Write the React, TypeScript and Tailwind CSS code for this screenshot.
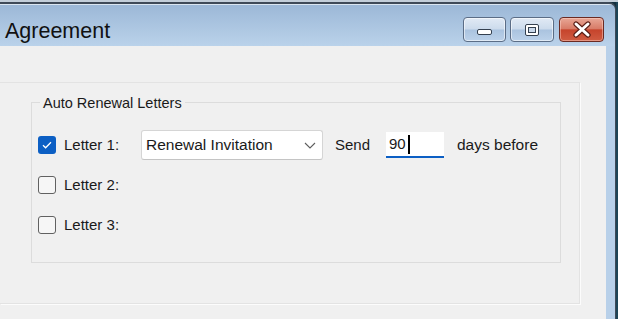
const ui = { fontFamily: '"Liberation Sans", Arial, sans-serif' };

function Checkbox({ checked }: { checked?: boolean }) {
  if (checked) {
    return (
      <span className="w-[18px] h-[18px] rounded-[3px] bg-[#0c5fc4] flex items-center justify-center shrink-0">
        <svg width="12" height="10" viewBox="0 0 12 10">
          <path d="M2 5.2 L4.6 7.8 L10 2.2" fill="none" stroke="#ffffff" strokeWidth="1.3" />
        </svg>
      </span>
    );
  }
  return (
    <span className="w-[18px] h-[18px] rounded-[3px] border border-[#616161] bg-[#f6f6f6] shrink-0" />
  );
}

function LetterRow({ n, checked, children }: { n: number; checked?: boolean; children?: React.ReactNode }) {
  return (
    <div className="h-[40px] flex items-center pl-[6px]">
      <Checkbox checked={checked} />
      <span className="ml-[8px] w-[77px] text-[15px] text-[#1a1a1a]">Letter {n}:</span>
      {children}
    </div>
  );
}

export default function App() {
  return (
    <div className="w-[618px] h-[319px] overflow-hidden flex flex-col bg-[#13303f]" style={ui}>
      <div className="h-[2px] bg-[#c3ced9] shrink-0" />
      <div className="flex flex-1 min-h-0">
        <div className="w-[616px] flex flex-col border-t-2 border-r border-[#3f4a58] rounded-tr-[7px] overflow-hidden">
          <div className="h-px bg-[#dbe6f1]" />
          {/* title bar */}
          <div className="h-[41px] flex bg-[linear-gradient(#9cb8d7,#bad2ea)]">
            <div className="flex-1 pl-[5px] pt-[13px] text-[21.5px] leading-[26px] text-[#111]">Agreement</div>
            <div className="flex items-start pt-[12px] pr-[11px]">
              <div className="w-[43px] h-[25px] rounded-[4px] border border-[#5b6d86] shadow-[inset_0_0_0_1px_rgba(255,255,255,0.55)] bg-[linear-gradient(#e1eaf5_0%,#ccdbec_48%,#aac3df_52%,#bcd2ea_100%)] flex justify-center">
                <div className="mt-[11px] w-[15px] h-[6px] rounded-[2px] border border-[#34404f] bg-white" />
              </div>
              <div className="ml-[4px] w-[44px] h-[25px] rounded-[4px] border border-[#5b6d86] shadow-[inset_0_0_0_1px_rgba(255,255,255,0.55)] bg-[linear-gradient(#e1eaf5_0%,#ccdbec_48%,#aac3df_52%,#bcd2ea_100%)] flex items-center justify-center">
                <div className="w-[14px] h-[12px] rounded-[2px] border border-[#34404f] bg-white p-[2px] flex">
                  <div className="flex-1 border border-[#34404f] bg-[#c9d8ea]" />
                </div>
              </div>
              <div className="ml-[5px] w-[45px] h-[25px] rounded-[4px] border border-[#6b2a22] shadow-[inset_0_0_0_1px_rgba(255,220,210,0.45)] bg-[linear-gradient(#e8a796_0%,#d87c68_46%,#c6442c_52%,#d05c42_100%)] flex items-center justify-center">
                <svg width="22" height="17" viewBox="0 0 22 17">
                  <path d="M5 3 L17 14 M17 3 L5 14" stroke="#5a1e16" strokeWidth="5.2" strokeLinecap="round" />
                  <path d="M5 3 L17 14 M17 3 L5 14" stroke="#ffffff" strokeWidth="3" strokeLinecap="round" />
                </svg>
              </div>
            </div>
          </div>
          {/* body */}
          <div className="flex flex-1 min-h-0">
            <div className="w-[606px] bg-[#f0f0f0] pt-[36px]">
              <div className="w-[580px] h-[222px] border border-l-0 border-[#e3e3e3] shadow-[1px_1px_0_#fcfcfc] pt-[19px]">
                <div className="ml-[31px] w-[530px] h-[161px] border border-[#dcdcdc] flex flex-col">
                  <span className="-mt-[9px] ml-[8px] px-[3px] w-fit bg-[#f0f0f0] text-[14.5px] leading-[18px] text-[#1a1a1a]">
                    Auto Renewal Letters
                  </span>
                  <div className="mt-[13px] flex flex-col">
                    <LetterRow n={1} checked>
                      <div className="w-[182px] h-[30px] rounded-[3px] border border-[#d5d5d5] border-b-[#c4c4c4] bg-white flex items-center pl-[4px] pr-[6px]">
                        <span className="flex-1 text-[15.5px] text-[#1a1a1a]">Renewal Invitation</span>
                        <svg width="12" height="7" viewBox="0 0 12 7">
                          <path d="M1 1 L6 6 L11 1" fill="none" stroke="#5f5f5f" strokeWidth="1.1" />
                        </svg>
                      </div>
                      <span className="ml-[12px] w-[51px] text-[15px] text-[#1a1a1a]">Send</span>
                      <div className="w-[58px] h-[26px] bg-white border-b-2 border-[#0c5fc4] flex items-center pl-[3px]">
                        <span className="text-[15px] text-[#1a1a1a]">90</span>
                        <span className="ml-[2px] w-[2px] h-[19px] bg-black" />
                      </div>
                      <span className="ml-[13px] text-[15.5px] text-[#1a1a1a]">days before</span>
                    </LetterRow>
                    <LetterRow n={2} />
                    <LetterRow n={3} />
                  </div>
                </div>
              </div>
            </div>
            <div className="w-[9px] bg-[#b8d0e9]" />
          </div>
        </div>
        <div className="w-[2px] bg-[#1d4456]" />
      </div>
    </div>
  );
}
